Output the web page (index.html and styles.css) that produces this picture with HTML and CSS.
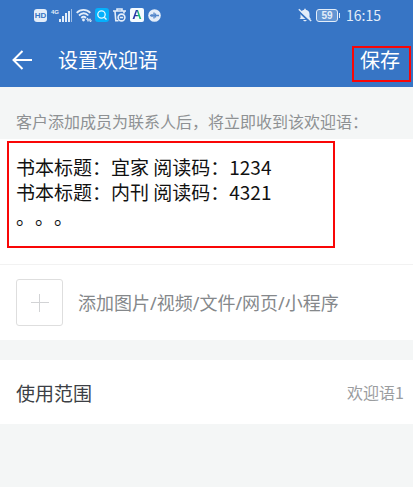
FILE: index.html
```html
<!DOCTYPE html>
<html lang="zh-CN">
<head>
  <meta charset="UTF-8">
  <meta name="viewport" content="width=device-width, initial-scale=1">
  <title>设置欢迎语</title>
  <link rel="stylesheet" href="styles.css">
</head>
<body>
  <header class="header">
    <!-- Phone status bar -->
    <div class="status-bar">
      <div class="status-icons">
        <span class="hd">HD</span>
        <span class="signal">
          <span class="network">4G</span>
          <svg width="13" height="13" viewBox="0 0 13 13" fill="#e3edf9">
            <rect x="0" y="10" width="2" height="3"/>
            <rect x="3" y="7" width="2" height="6"/>
            <rect x="6" y="4" width="2" height="9"/>
            <rect x="9" y="2" width="2" height="11"/>
            <rect x="12" y="0" width="1" height="13" opacity="0.6"/>
          </svg>
        </span>
        <svg width="16" height="14" viewBox="0 0 16 14" fill="none" stroke="#e3edf9" stroke-width="1.8">
          <path d="M.7 4.800C4.500.8 10.500.8 14.300 4.800M3 7.500C6 4.500 9.500 4.500 12.300 7.500M5.300 10C6.800 8.500 8.500 8.500 10 10"/>
          <circle cx="7.500" cy="12" r="1.400" fill="#e3edf9" stroke="none"/>
          <path d="M10.500 11.300H15M12 10l-1.500 1.300M15.500 12.800H11M14 14l1.500-1.200" stroke-width="1"/>
        </svg>
        <svg class="search" width="14" height="14" viewBox="0 0 14 14" fill="none">
          <rect width="14" height="14" rx="3" fill="#05b0fb"/>
          <circle cx="6.500" cy="6.500" r="3.700" stroke="#e6f8ff" stroke-width="1.300"/>
          <path d="M9.200 9.200l2.300 2.300" stroke="#e6f8ff" stroke-width="1.300"/>
        </svg>
        <svg width="13" height="14" viewBox="0 0 13 14" fill="none" stroke="#e3edf9" stroke-width="1.600">
          <path d="M0 3h13M4 2.500V1h5v1.500M2 3.500l.8 9.300h2.700M11 3.500v2"/>
          <circle cx="8.500" cy="9.500" r="3.400"/>
          <path d="M6.800 9.500h3.400"/>
        </svg>
        <span class="app-a"><b>A</b></span>
        <svg width="13" height="13" viewBox="0 0 13 13">
          <circle cx="6.500" cy="6.500" r="6.300" fill="#e3edf9"/>
          <path d="M2 6.500h9M6 3.500v6M7.500 4.500v4M4 5v3" stroke="#5588cb" stroke-width="1.300"/>
        </svg>
      </div>
      <div class="status-right">
        <svg width="14" height="14" viewBox="0 0 14 14">
          <path d="M2.500 10V6c0-2.600 1.800-4 3.700-4.300V.8h1.600v.9C9.700 2 11.500 3.400 11.500 6v3l1.300 2H1.500zM5.200 12h3.600c-.3 1.800-3.300 1.800-3.600 0z" fill="#e3edf9"/>
          <path d="M0 2.500L12 14" stroke="#3775c5" stroke-width="2"/>
          <path d="M.8 1.300L13.200 13" stroke="#e3edf9" stroke-width="1.500"/>
        </svg>
        <span class="battery">59</span>
        <time class="clock">16:15</time>
      </div>
    </div>

    <!-- Title bar -->
    <div class="title-bar">
      <button class="back" type="button" aria-label="返回">
        <svg width="20" height="20" viewBox="0 0 20 20" fill="none" stroke="#fff" stroke-width="2">
          <path d="M10.500 1L1.500 10l9 9M1.500 10H20"/>
        </svg>
      </button>
      <h1>设置欢迎语</h1>
      <button class="save" type="button">保存</button>
    </div>
  </header>

  <main>
    <label class="hint" for="welcome">客户添加成员为联系人后，将立即收到该欢迎语：</label>

    <section class="editor">
      <textarea id="welcome" rows="3">书本标题：宜家 阅读码：1234
书本标题：内刊 阅读码：4321
。。。</textarea>
    </section>

    <section class="attach">
      <button class="add" type="button" id="add" aria-label="添加">
        <svg width="18" height="18" viewBox="0 0 18 18" stroke="#d2d3d5">
          <path d="M0 8.500h18M8.500 0v18"/>
        </svg>
      </button>
      <label for="add">添加图片/视频/文件/网页/小程序</label>
    </section>

    <a class="scope" href="#">
      <span>使用范围</span>
      <span class="scope-value">欢迎语1</span>
    </a>
  </main>
</body>
</html>
```

FILE: styles.css
```css
* {
  box-sizing: border-box;
}

body {
  margin: 0;
  background: #f4f6f6;
  color: #111;
  font-family: "Noto Sans CJK SC", "Noto Sans", sans-serif;
}

button {
  padding: 0;
  border: none;
  background: none;
  font-family: inherit;
  cursor: pointer;
}

svg {
  display: block;
  flex: none;
}

/* Header */
.header {
  background: #3775c5;
  color: #fff;
}

.status-bar {
  display: flex;
  justify-content: space-between;
  align-items: center;
  height: 32px;
  padding: 0 32px 2px 34px;
  color: #e3edf9;
}

.status-icons,
.status-right {
  display: flex;
  align-items: center;
  gap: 4px;
}

.hd {
  width: 13px;
  height: 13px;
  border-radius: 3px;
  background: #e3edf9;
  color: #3775c5;
  font: bold 8px/13px "Liberation Sans", sans-serif;
  text-align: center;
}

.signal {
  display: flex;
  align-items: flex-start;
}

.network {
  width: 8px;
  font: bold 6px/6px "Liberation Sans", sans-serif;
}

.search {
  margin-left: -1px;
}

.app-a {
  width: 14px;
  height: 14px;
  border-radius: 2px;
  background: #f5fbff;
  font: bold 13px/14px "Liberation Sans", sans-serif;
  text-align: center;
}

.app-a b {
  background: linear-gradient(90deg, #2635a8 50%, #18b878 60%);
  background-clip: text;
  -webkit-background-clip: text;
  color: transparent;
}

.battery {
  position: relative;
  width: 22px;
  height: 13px;
  margin-right: 4px;
  border: 1px solid #e3edf9;
  border-radius: 3px;
  background: #6496d3;
  font: bold 10px/11px "Liberation Sans", sans-serif;
  text-align: center;
}

.battery::after {
  content: "";
  position: absolute;
  top: 3px;
  right: -3px;
  width: 1px;
  height: 5px;
  background: #e3edf9;
}

.clock {
  font-size: 14px;
  line-height: 20px;
}

.title-bar {
  display: flex;
  align-items: center;
  height: 55px;
  padding: 0 2px 0 12px;
}

h1 {
  flex: 1;
  margin: 0 0 0 26px;
  font-size: 20px;
  font-weight: 400;
  line-height: 24px;
}

.save {
  align-self: flex-end;
  margin-bottom: 5px;
  padding: 0 9px 8px 6px;
  border: 2px solid #f90606;
  color: #fff;
  font-size: 20px;
  line-height: 24px;
}

/* Welcome message */
.hint {
  display: block;
  padding: 22px 16px 6px;
  color: #8e9193;
  font-size: 16px;
  line-height: 24px;
  white-space: nowrap;
}

.editor {
  padding: 2px 19% 16px 7px;
  border-bottom: 1px solid #f2f2f2;
  background: #fff;
}

textarea {
  display: block;
  width: 100%;
  padding: 11px 7px 17px;
  border: 2px solid #f90606;
  outline: none;
  resize: none;
  background: #fff;
  color: #111;
  font-family: inherit;
  font-size: 19px;
  line-height: 25px;
  text-spacing-trim: space-all;
  overflow: hidden;
}

/* Attachments */
.attach {
  display: flex;
  align-items: center;
  gap: 15px;
  padding: 14px 16px;
  background: #fff;
  color: #85888b;
  font-family: "Noto Sans", "Noto Sans CJK SC", sans-serif;
  font-size: 18px;
  line-height: 24px;
  white-space: nowrap;
}

.add {
  display: flex;
  justify-content: center;
  align-items: center;
  width: 47px;
  height: 47px;
  border: 1px solid #dedede;
  border-radius: 3px;
}

/* Scope row */
.scope {
  display: flex;
  justify-content: space-between;
  align-items: center;
  height: 64px;
  margin-top: 20px;
  padding: 0 9px 0 16px;
  background: #fff;
  color: #3c3f45;
  font-size: 19px;
  text-decoration: none;
}

.scope-value {
  color: #9b9d9f;
  font-size: 16px;
}
```
